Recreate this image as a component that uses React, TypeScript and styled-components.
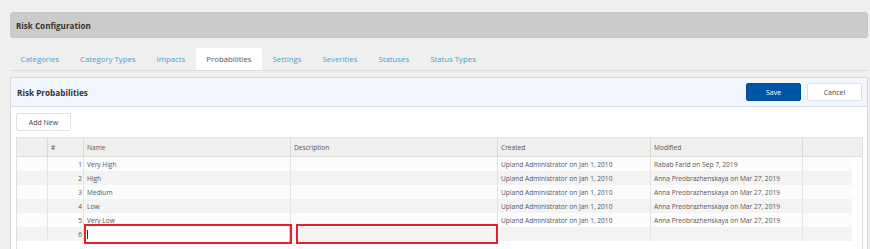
import React from "react";
import styled, { createGlobalStyle } from "styled-components";

const GlobalStyle = createGlobalStyle`
  body {
    margin: 0;
    background: #efefef;
    font-family: "Open Sans", "Noto Sans", sans-serif;
    color: #333;
  }
`;

const Page = styled.div`
  padding: 12px 2px 0 10px;
  height: 249px;
  box-sizing: border-box;
  overflow: hidden;
`;

const TitleBar = styled.div`
  height: 26px;
  box-sizing: border-box;
  background: #cbcbcb;
  border: 1px solid #c6c6c6;
  border-radius: 3px;
  display: flex;
  align-items: center;
  padding-left: 5px;
  font-size: 8.1px;
  font-weight: 700;
  color: #333;
`;

const TabStrip = styled.div`
  margin-top: 10px;
  height: 23px;
  box-sizing: border-box;
  display: flex;
  border-bottom: 1px solid #dcdcdc;
`;

const Tab = styled.div<{ $active?: boolean }>`
  height: 22px;
  padding: 0 10.5px;
  display: flex;
  align-items: center;
  font-size: 7.8px;
  color: ${p => (p.$active ? "#555" : "#4a9fd2")};
  background: ${p => (p.$active ? "#fff" : "transparent")};
  border-radius: 2px 2px 0 0;
`;

const Panel = styled.div`
  margin-top: 6px;
  background: #fff;
  border: 1px solid #d9d9d9;
  border-bottom: none;
  height: 180px;
`;

const PanelHeader = styled.div`
  height: 29px;
  box-sizing: border-box;
  background: #f1f6fc;
  border-bottom: 1px solid #d3e1ef;
  display: flex;
  align-items: center;
  justify-content: space-between;
  padding: 0 5px 0 6px;
`;

const PanelTitle = styled.div`
  font-size: 8.2px;
  font-weight: 700;
  color: #333;
`;

const Actions = styled.div`
  display: flex;
  gap: 6px;
`;

const Button = styled.button<{ $primary?: boolean }>`
  display: block;
  height: 18px;
  width: 55px;
  box-sizing: border-box;
  border-radius: 2px;
  font-family: inherit;
  font-size: 7px;
  padding: 0;
  cursor: pointer;
  background: ${p => (p.$primary ? "#0054a6" : "#fff")};
  color: ${p => (p.$primary ? "#fff" : "#444")};
  border: 1px solid ${p => (p.$primary ? "#004a94" : "#e0e0e0")};
`;

const Body = styled.div`
  padding: 6px 4px 0 5px;
`;

const Grid = styled.div`
  margin-top: 6px;
  border-left: 1px solid #dedede;
  border-right: 1px solid #dedede;
  height: 120px;
`;

const cols = "31px 36px 207px 207px 153px 152px";

const HeadRow = styled.div`
  display: grid;
  grid-template-columns: ${cols} 1fr;
  height: 20px;
  background: #efefee;
  border-top: 1px solid #e4e4e4;
  border-bottom: 1px solid #dcdcdc;
  box-sizing: border-box;
`;

const HeadCell = styled.div`
  border-right: 1px solid #d8d8d8;
  display: flex;
  align-items: center;
  padding-left: 3px;
  font-size: 6.6px;
  color: #555;
  &:last-child {
    border-right: none;
  }
`;

const Row = styled.div<{ $odd?: boolean }>`
  display: grid;
  grid-template-columns: ${cols} 49px;
  height: 14px;
  width: 835px;
  background: ${p => (p.$odd ? "#f3f3f3" : "#fcfcfc")};
`;

const Cell = styled.div<{ $num?: boolean; $mark?: "name" | "desc" }>`
  position: relative;
  border-right: 1px solid #e3e3e3;
  display: flex;
  align-items: center;
  justify-content: ${p => (p.$num ? "flex-end" : "flex-start")};
  padding: ${p => (p.$num ? "0 1px 0 0" : "0 0 0 3px")};
  font-size: 6.6px;
  color: #555;
  white-space: nowrap;
  &:last-child {
    border-right: none;
  }
  ${p =>
    p.$mark &&
    `
    &::after {
      content: "";
      position: absolute;
      top: -3px;
      bottom: -3px;
      left: ${p.$mark === "name" ? "0" : "5px"};
      right: ${p.$mark === "name" ? "-2px" : "-1px"};
      border: 2px solid #e3202b;
      pointer-events: none;
    }
  `}
`;

const EditBox = styled.div`
  position: absolute;
  top: -2px;
  bottom: -2px;
  left: 1px;
  right: 0;
  background: #fff;
  border: 1px solid #f4b1b1;
  &::before {
    content: "";
    position: absolute;
    left: 1px;
    top: 4px;
    height: 9px;
    width: 1px;
    background: #333;
  }
`;

const tabs = [
  "Categories",
  "Category Types",
  "Impacts",
  "Probabilities",
  "Settings",
  "Severities",
  "Statuses",
  "Status Types"
];

const rows = [
  { n: 1, name: "Very High", created: "Upland Administrator on Jan 1, 2010", modified: "Rabab Farid on Sep 7, 2019" },
  { n: 2, name: "High", created: "Upland Administrator on Jan 1, 2010", modified: "Anna Preobrazhenskaya on Mar 27, 2019" },
  { n: 3, name: "Medium", created: "Upland Administrator on Jan 1, 2010", modified: "Anna Preobrazhenskaya on Mar 27, 2019" },
  { n: 4, name: "Low", created: "Upland Administrator on Jan 1, 2010", modified: "Anna Preobrazhenskaya on Mar 27, 2019" },
  { n: 5, name: "Very Low", created: "Upland Administrator on Jan 1, 2010", modified: "Anna Preobrazhenskaya on Mar 27, 2019" }
];

export default function App() {
  return (
    <>
      <GlobalStyle />
      <Page>
        <TitleBar>Risk Configuration</TitleBar>
        <TabStrip>
          {tabs.map(t => (
            <Tab key={t} $active={t === "Probabilities"}>
              {t}
            </Tab>
          ))}
        </TabStrip>
        <Panel>
          <PanelHeader>
            <PanelTitle>Risk Probabilities</PanelTitle>
            <Actions>
              <Button $primary>Save</Button>
              <Button>Cancel</Button>
            </Actions>
          </PanelHeader>
          <Body>
            <Button>Add New</Button>
            <Grid>
              <HeadRow>
                <HeadCell />
                <HeadCell>#</HeadCell>
                <HeadCell>Name</HeadCell>
                <HeadCell>Description</HeadCell>
                <HeadCell>Created</HeadCell>
                <HeadCell>Modified</HeadCell>
                <HeadCell />
              </HeadRow>
              {rows.map((r, i) => (
                <Row key={r.n} $odd={i % 2 === 1}>
                  <Cell />
                  <Cell $num>{r.n}</Cell>
                  <Cell>{r.name}</Cell>
                  <Cell />
                  <Cell>{r.created}</Cell>
                  <Cell>{r.modified}</Cell>
                  <Cell />
                </Row>
              ))}
              <Row $odd>
                <Cell />
                <Cell $num>6</Cell>
                <Cell $mark="name">
                  <EditBox />
                </Cell>
                <Cell $mark="desc" />
                <Cell />
                <Cell />
                <Cell />
              </Row>
            </Grid>
          </Body>
        </Panel>
      </Page>
    </>
  );
}
